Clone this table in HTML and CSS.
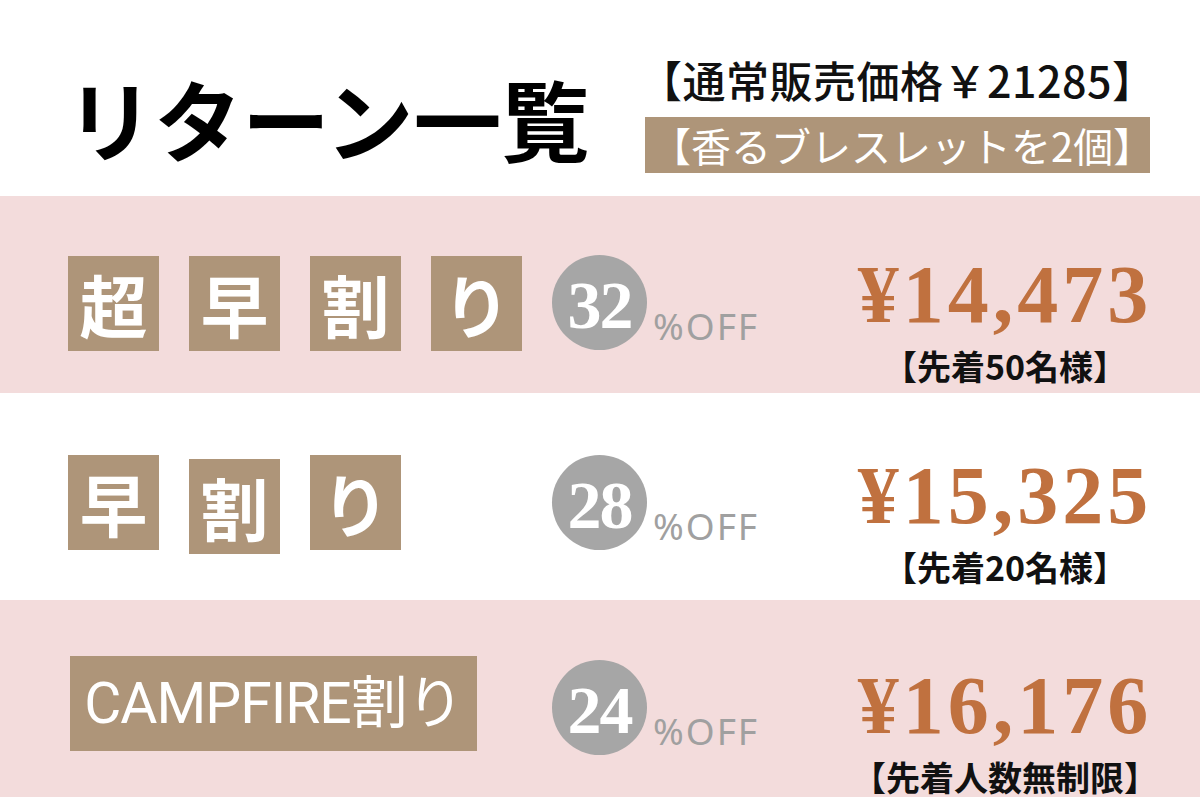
FILE: index.html
```html
<!DOCTYPE html>
<html lang="ja">
<head>
<meta charset="utf-8">
<title>リターン一覧</title>
<link rel="stylesheet" href="styles.css">
</head>
<body>
<div class="page">
  <header class="header">
    <h1 class="title">リターン一覧</h1>
    <div class="header-info">
      <p class="regular-price">【通常販売価格￥21285】</p>
      <p class="item-tag">【香るブレスレットを2個】</p>
    </div>
  </header>

  <section class="row row-pink row-1">
    <div class="labels">
      <span class="label-box">超</span>
      <span class="label-box">早</span>
      <span class="label-box">割</span>
      <span class="label-box">り</span>
    </div>
    <div class="discount">
      <span class="discount-circle">32</span>
      <span class="discount-off">%OFF</span>
    </div>
    <div class="price">
      <span class="price-amount">¥14,473</span>
      <span class="price-note">【先着50名様】</span>
    </div>
  </section>

  <section class="row row-white row-2">
    <div class="labels">
      <span class="label-box">早</span>
      <span class="label-box label-box-low">割</span>
      <span class="label-box">り</span>
    </div>
    <div class="discount">
      <span class="discount-circle">28</span>
      <span class="discount-off">%OFF</span>
    </div>
    <div class="price">
      <span class="price-amount">¥15,325</span>
      <span class="price-note">【先着20名様】</span>
    </div>
  </section>

  <section class="row row-pink row-3">
    <div class="labels">
      <span class="label-wide">CAMPFIRE割り</span>
    </div>
    <div class="discount">
      <span class="discount-circle">24</span>
      <span class="discount-off">%OFF</span>
    </div>
    <div class="price">
      <span class="price-amount">¥16,176</span>
      <span class="price-note">【先着人数無制限】</span>
    </div>
  </section>
</div>
</body>
</html>
```

FILE: styles.css
```css
html, body {
  margin: 0;
  padding: 0;
  background: #ffffff;
}

.page {
  width: 1200px;
  height: 800px;
  overflow: hidden;
  font-family: "Noto Sans CJK JP", "Noto Sans", sans-serif;
}

/* Header */
.header {
  height: 196px;
  box-sizing: border-box;
  display: flex;
  justify-content: space-between;
  align-items: flex-start;
  padding: 0 50px 0 66px;
}

.title {
  margin: 73px 0 0 0;
  font-size: 88px;
  line-height: 1;
  font-weight: 700;
  color: #000000;
}

.header-info {
  margin-top: 58px;
  width: 505px;
  display: flex;
  flex-direction: column;
}

.regular-price {
  margin: 0 0 0 -6px;
  font-size: 43px;
  line-height: 43px;
  font-weight: 500;
  letter-spacing: 0.5px;
  color: #111111;
  white-space: nowrap;
}

.item-tag {
  margin: 16px 0 0 0;
  height: 56px;
  line-height: 56px;
  padding-left: 6px;
  background: #ae9579;
  color: #ffffff;
  font-size: 40px;
  font-weight: 400;
  white-space: nowrap;
}

/* Rows */
.row {
  display: flex;
  align-items: flex-start;
  box-sizing: border-box;
  padding-left: 68px;
}

.row-pink {
  background: #f3dcdc;
}

.row-white {
  background: #ffffff;
}

.row-1 {
  height: 197px;
  padding-top: 59px;
}

.row-2 {
  height: 207px;
  padding-top: 62px;
}

.row-3 {
  height: 197px;
  padding-top: 56px;
}

.labels {
  width: 484px;
  display: flex;
  gap: 30px;
  align-items: flex-start;
}

.label-box {
  width: 91px;
  height: 95px;
  background: #ae9579;
  color: #ffffff;
  font-size: 68px;
  font-weight: 700;
  line-height: 95px;
  text-align: center;
}

.row-1 .label-box {
  margin-top: 1px;
}

.label-box-low {
  margin-top: 4px;
}

.label-wide {
  margin-left: 2px;
  width: 407px;
  height: 95px;
  background: #ae9579;
  color: #ffffff;
  font-family: "Roboto", "Noto Sans CJK JP", sans-serif;
  font-weight: 400;
  font-size: 57px;
  line-height: 95px;
  letter-spacing: -1px;
  text-align: center;
  white-space: nowrap;
}

.discount {
  width: 298px;
  display: flex;
  align-items: flex-end;
}

.row-3 .discount {
  margin-top: 4px;
}

.discount-circle {
  width: 95px;
  height: 95px;
  border-radius: 50%;
  background: #a6a6a6;
  color: #ffffff;
  display: flex;
  align-items: center;
  justify-content: center;
  font-family: "Liberation Serif", serif;
  font-weight: 700;
  font-size: 68px;
  line-height: 1;
  letter-spacing: -2px;
  padding-top: 4px;
  box-sizing: border-box;
}

.discount-off {
  margin: 0 0 6px 6px;
  font-family: "Noto Sans", sans-serif;
  font-size: 37px;
  line-height: 1;
  letter-spacing: 2px;
  color: #a0a0a0;
}

.price {
  width: 310px;
  display: flex;
  flex-direction: column;
  align-items: center;
  margin-top: -1px;
}

.row-2 .price {
  margin-top: 0;
}

.row-3 .price {
  margin-top: 9px;
}

.price-amount {
  font-family: "Liberation Serif", serif;
  font-weight: 700;
  font-size: 82px;
  line-height: 1;
  letter-spacing: 4px;
  color: #c0713f;
  white-space: nowrap;
}

.price-note {
  margin-top: 11px;
  font-size: 34px;
  font-weight: 700;
  line-height: 38px;
  color: #111111;
  white-space: nowrap;
}
```
